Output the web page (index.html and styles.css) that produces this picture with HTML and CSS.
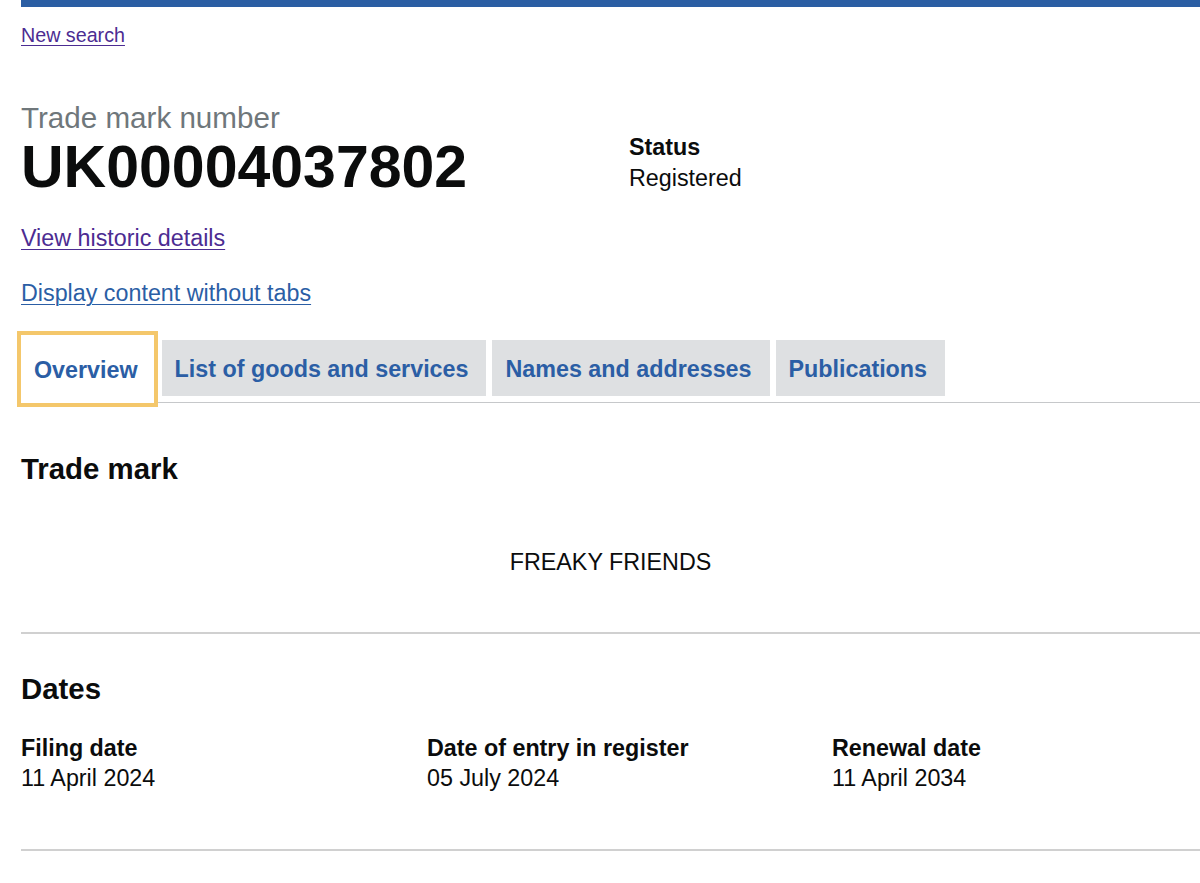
FILE: index.html
```html
<!DOCTYPE html>
<html lang="en">
<head>
<meta charset="utf-8">
<title>Trade mark UK00004037802</title>
<link rel="stylesheet" href="styles.css">
</head>
<body>
<div class="topbar"></div>
<main class="page">
  <a class="link visited back" href="#">New search</a>

  <div class="header">
    <div class="header-main">
      <div class="caption">Trade mark number</div>
      <h1 class="number">UK00004037802</h1>
    </div>
    <div class="header-status">
      <div class="status-label">Status</div>
      <div class="status-value">Registered</div>
    </div>
  </div>

  <a class="link visited historic" href="#">View historic details</a>
  <a class="link display" href="#">Display content without tabs</a>

  <ul class="tabs">
    <li class="tab tab-selected"><a href="#">Overview</a></li>
    <li class="tab"><a href="#">List of goods and services</a></li>
    <li class="tab"><a href="#">Names and addresses</a></li>
    <li class="tab"><a href="#">Publications</a></li>
  </ul>

  <section class="panel">
    <h2 class="section-title">Trade mark</h2>
    <p class="mark-text">FREAKY FRIENDS</p>
    <hr class="rule rule-mark">

    <h2 class="section-title dates-title">Dates</h2>
    <div class="dates">
      <div class="date">
        <div class="date-label">Filing date</div>
        <div class="date-value">11 April 2024</div>
      </div>
      <div class="date">
        <div class="date-label">Date of entry in register</div>
        <div class="date-value">05 July 2024</div>
      </div>
      <div class="date">
        <div class="date-label">Renewal date</div>
        <div class="date-value">11 April 2034</div>
      </div>
    </div>
    <hr class="rule rule-dates">
  </section>
</main>
</body>
</html>
```

FILE: styles.css
```css
* { box-sizing: border-box; }

html, body {
  margin: 0;
  padding: 0;
  background: #ffffff;
  overflow: hidden;
}

body {
  font-family: "Liberation Sans", Arial, sans-serif;
  color: #0b0c0c;
}

.topbar {
  margin-left: 21px;
  height: 7px;
  background: #2b5ea3;
}

.page {
  padding-left: 21px;
  display: flex;
  flex-direction: column;
  align-items: flex-start;
}

.link {
  color: #2b5ea5;
  text-decoration: underline;
  text-decoration-thickness: 1px;
  text-underline-offset: 3px;
}

.link.visited { color: #4c2c92; }

.back {
  margin-top: 16px;
  font-size: 19.7px;
  line-height: 24px;
}

.header {
  margin-top: 54px;
  display: grid;
  grid-template-columns: 608px auto;
  align-items: start;
}

.caption {
  color: #6f777b;
  font-size: 29.6px;
  line-height: 34px;
}

.number {
  margin: 0;
  font-size: 59px;
  line-height: 64px;
  font-weight: 700;
}

.header-status {
  margin-top: 31px;
  font-size: 23.3px;
  line-height: 30px;
}

.status-label { font-weight: 700; }

.status-value { margin-top: 1px; }

.historic {
  margin-top: 25px;
  font-size: 23.3px;
  line-height: 28px;
}

.display {
  margin-top: 27px;
  font-size: 23.3px;
  line-height: 28px;
}

.tabs {
  list-style: none;
  margin: 28px 0 0 0;
  padding: 0;
  display: flex;
  align-items: flex-start;
  width: 1179px;
  border-bottom: 1px solid #c6c8ca;
}

.tab {
  margin-top: 5px;
  margin-right: 6px;
  height: 56px;
  padding: 3px 18px 0 13px;
  background: #dee0e2;
  display: flex;
  align-items: center;
}

.tab a {
  color: #2b5ea5;
  font-size: 23.3px;
  font-weight: 700;
  text-decoration: none;
}

.tab-selected {
  margin-top: 0;
  margin-right: 8px;
  margin-bottom: -1px;
  height: 68px;
  padding: 2px 16px 0 13px;
  background: #ffffff;
  box-shadow: 0 0 0 4px #f4c76b;
}

.panel {
  width: 1179px;
}

.section-title {
  margin: 49px 0 0 0;
  font-size: 29.4px;
  line-height: 34px;
  font-weight: 700;
}

.mark-text {
  margin: 62px 0 0 0;
  text-align: center;
  font-size: 23.3px;
  line-height: 28px;
}

.rule {
  border: 0;
  height: 2px;
  background: #d0d0d0;
  margin: 0;
}

.rule-mark { margin-top: 56px; }

.dates-title { margin-top: 38px; }

.dates {
  margin-top: 27px;
  display: grid;
  grid-template-columns: 406px 405px 1fr;
}

.date-label {
  font-size: 23.3px;
  line-height: 30px;
  font-weight: 700;
}

.date-value {
  font-size: 23.3px;
  line-height: 30px;
}

.rule-dates { margin-top: 56px; }
```
